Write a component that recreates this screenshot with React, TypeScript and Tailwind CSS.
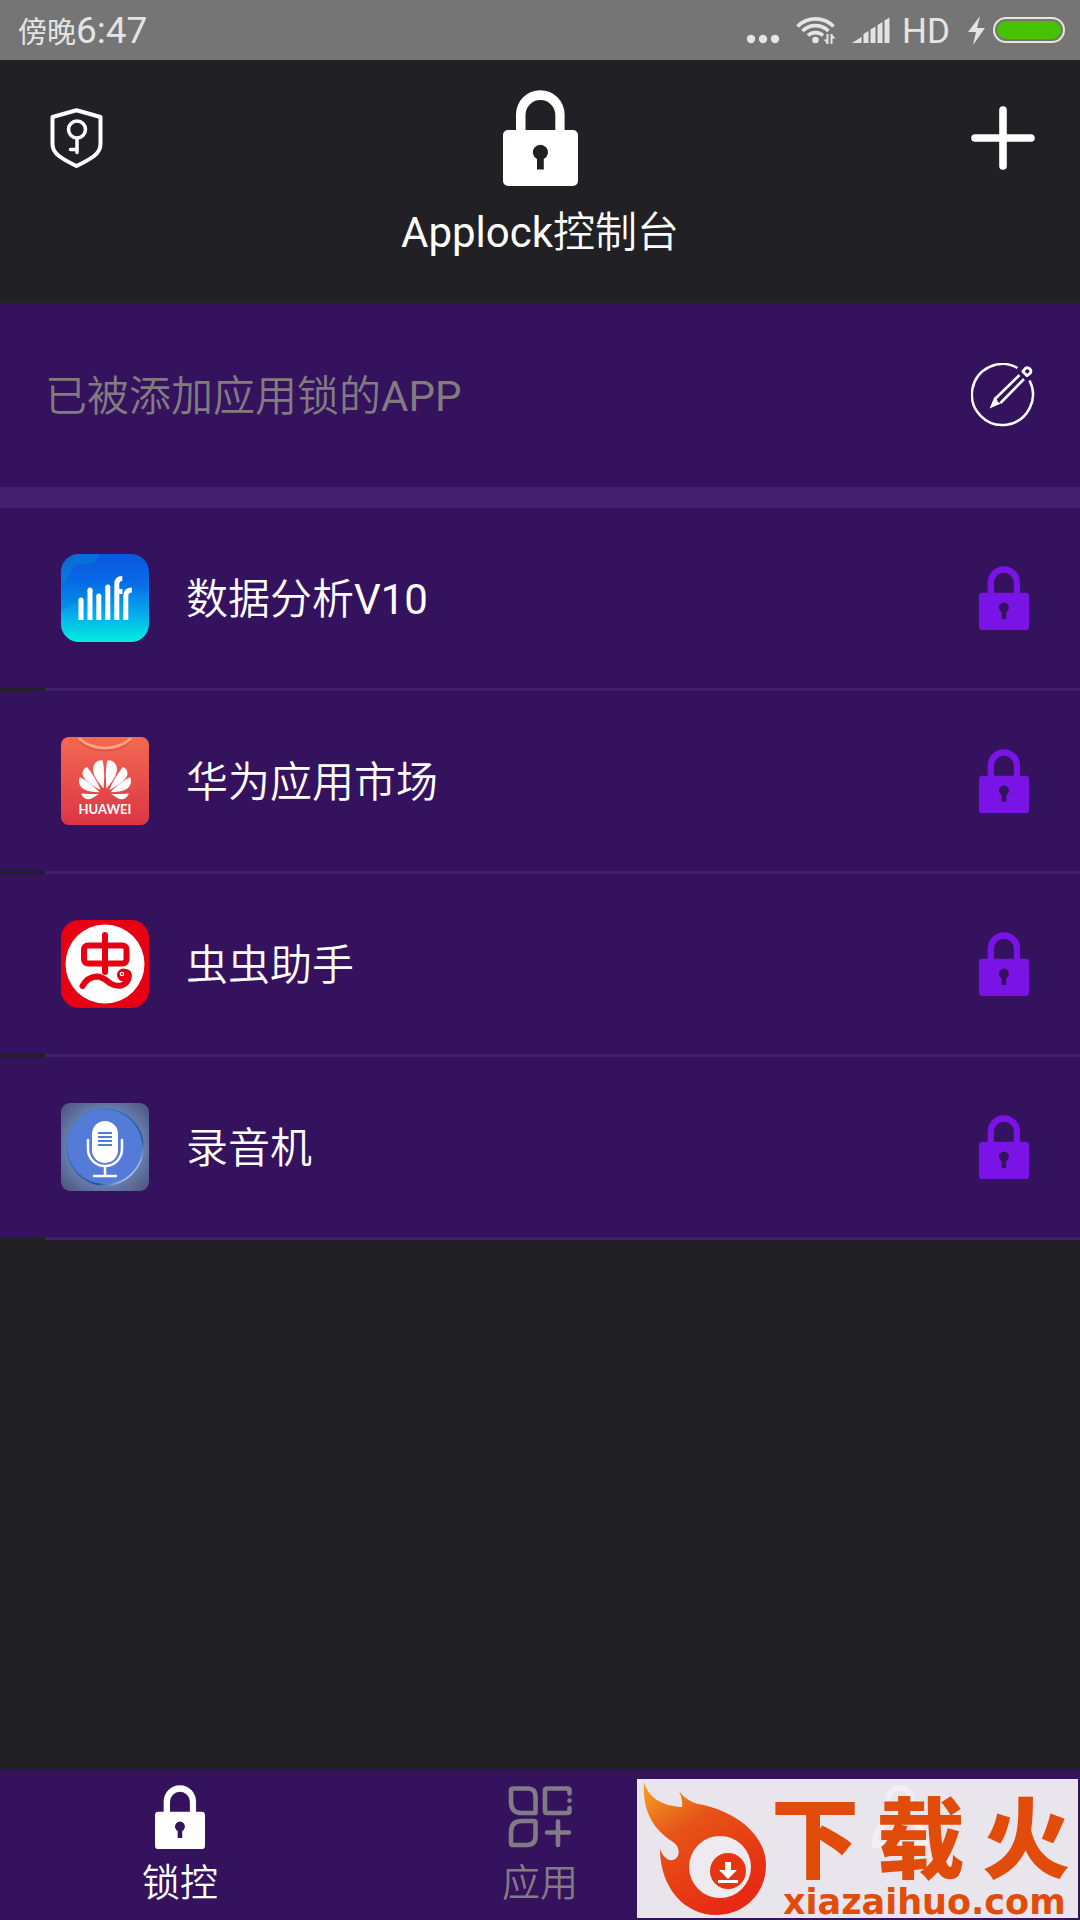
import type { ReactNode } from "react";

function Padlock({ className }: { className: string }) {
  return (
    <svg viewBox="0 0 75 96" className={className} fill="currentColor" aria-hidden="true">
      <path
        fillRule="evenodd"
        d="M13 40V24.500a24.300 24.300 0 0 1 48.600 0V40H70a5 5 0 0 1 5 5v46a5 5 0 0 1-5 5H5a5 5 0 0 1-5-5V45a5 5 0 0 1 5-5zM22.500 40h29.800V25a14.900 14.900 0 0 0-29.800 0zM34 69v10.500h6.800V69a7.500 7.500 0 1 0-6.800 0z"
      />
    </svg>
  );
}

function ShieldKey() {
  return (
    <svg viewBox="0 0 53 60" className="h-[60px] w-[53px]" fill="none" stroke="currentColor" strokeWidth="4" strokeLinejoin="round" strokeLinecap="round" aria-hidden="true">
      <path d="M26.500 2.300 50.500 9v27q0 7-6.500 12-6 4.500-17.500 10Q15 52.500 9 48q-6.500-5-6.500-12V9z" />
      <circle cx="27" cy="21.500" r="8.500" strokeWidth="3.500" />
      <path d="M27 30.500V44.500M20.500 41.500H27" strokeWidth="3.500" />
    </svg>
  );
}

function Plus() {
  return (
    <svg viewBox="0 0 64 64" className="size-16" stroke="currentColor" strokeWidth="7.600" strokeLinecap="round" aria-hidden="true">
      <path d="M32 4v56M4 32h56" />
    </svg>
  );
}

function PencilCircle() {
  return (
    <svg viewBox="0 0 64 64" className="size-16" fill="none" stroke="currentColor" strokeWidth="2.500" aria-hidden="true">
      <path d="M46.500 5A30.500 30.500 0 1 0 58.500 17.500" />
      <path d="M48.500 12 24.500 35.500M53 16 29.500 40" strokeWidth="2.600" />
      <path d="M23.500 34 18.500 45.500l11.500-5-3-1.500-1.500-3z" fill="currentColor" stroke="none" />
      <path d="M51.800 8.500 54.500 5.300a3.500 3.500 0 0 1 4.800 4.800L56 12.700z" strokeWidth="2.800" strokeLinejoin="round" />
    </svg>
  );
}

function AnalyticsIcon() {
  return (
    <svg viewBox="0 0 88 88" className="size-[88px]" aria-hidden="true">
      <defs>
        <linearGradient id="analytics" x1="0" y1="0" x2="0" y2="1">
          <stop offset="0" stopColor="#0758dc" />
          <stop offset=".3" stopColor="#0869e8" />
          <stop offset=".65" stopColor="#05a5ec" />
          <stop offset="1" stopColor="#04eee0" />
        </linearGradient>
        <clipPath id="analytics-clip"><rect width="88" height="88" rx="18" /></clipPath>
      </defs>
      <g clipPath="url(#analytics-clip)">
        <rect width="88" height="88" fill="url(#analytics)" />
        <path d="M0 0h39l-6 9-20 2L6 27l-6 5z" fill="#0c86cf" opacity=".45" />
        <path d="M0 32 24 12l25 5-22 25L0 57zM49 17l21-8 18 29-28-5z" fill="#0765dc" opacity=".25" />
      </g>
      <g stroke="#fff" strokeWidth="5" fill="none">
        <path d="M20 66V46M29 66V36M37.800 66V42M46.800 66V33" />
        <path d="M55.800 66V30q0-5.500 5.500-5.500M53.500 37.500h8M64.800 66V42q0-6 6-6" />
      </g>
      <g fill="#fff"><circle cx="20" cy="46" r="2.500" /><circle cx="29" cy="36" r="2.500" /><circle cx="37.800" cy="42" r="2.500" /><circle cx="46.800" cy="33" r="2.500" /></g>
    </svg>
  );
}

function HuaweiIcon() {
  const petals = "M42.500 51.500C34 42 31 35 32.500 29.500 34 24.500 38 23 41.500 23.200 43.500 31 43.500 42 42.500 51.500zM39.500 53C28 46.500 21.500 41.500 21.500 36.500 21.500 33 23.500 31 26 30 31 36 37 45.500 39.500 53zM38.500 55.300C25 55 17.500 51.500 18 43.500c0 0 .3-2 .8-3.200C26 43.500 34 50.500 38.500 55.300zM37.500 57C33 60.500 29.500 62.800 26.500 62.300 23.500 61.800 21 59 20.200 56.500c5.800.5 12.300.5 17.300.5z";
  return (
    <svg viewBox="0 0 88 88" className="size-[88px]" aria-hidden="true">
      <defs>
        <linearGradient id="huawei" x1="0" y1="0" x2="0" y2="1">
          <stop offset="0" stopColor="#f26a52" />
          <stop offset="1" stopColor="#dc3545" />
        </linearGradient>
      </defs>
      <rect width="88" height="88" rx="8" fill="url(#huawei)" />
      <path d="M17 1q11 10.500 27 10.500T70 1" fill="none" stroke="#d9503f" strokeWidth="3" opacity=".5" transform="translate(0 2)" />
      <path d="M18 1.500Q29 11 44 11t26-9.500" fill="none" stroke="#ffa68f" strokeWidth="2.500" />
      <path d={petals} fill="#fff" />
      <path d={petals} fill="#fff" transform="translate(88 0) scale(-1 1)" />
      <text x="44" y="77.300" textAnchor="middle" fill="#fff" fontSize="13" fontWeight="700" fontFamily="Lato, sans-serif">HUAWEI</text>
    </svg>
  );
}

function BugIcon() {
  return (
    <svg viewBox="0 0 88 88" className="size-[88px]" aria-hidden="true">
      <rect width="88" height="88" rx="18" fill="#e60012" />
      <circle cx="44" cy="44" r="39.500" fill="#fff" />
      <g fill="none" stroke="#e60012" strokeWidth="6" strokeLinecap="round">
        <rect x="23" y="25.500" width="42.500" height="18" rx="4" />
        <path d="M44 15v37" />
        <path d="M21.500 66q5-9 14-9.500c7 0 9 4 14 7 8 4.500 16 2 18-5 1-3 .5-6-3-6.500" />
      </g>
      <circle cx="62.500" cy="55" r="6.500" fill="#e60012" />
      <circle cx="61" cy="54" r="2.300" fill="#fff" />
      <circle cx="61" cy="54" r="1" fill="#e60012" />
    </svg>
  );
}

function RecorderIcon() {
  return (
    <svg viewBox="0 0 88 88" className="size-[88px]" aria-hidden="true">
      <defs>
        <radialGradient id="recorder-bg" cx=".5" cy=".5" r=".7">
          <stop offset=".5" stopColor="#7089bd" />
          <stop offset="1" stopColor="#4a5279" />
        </radialGradient>
        <linearGradient id="recorder-rim" x1="0" y1="0" x2="1" y2="1">
          <stop offset=".2" stopColor="#3f7fd0" />
          <stop offset=".7" stopColor="#1d549c" />
          <stop offset=".85" stopColor="#a9c4ee" />
        </linearGradient>
      </defs>
      <rect width="88" height="88" rx="9" fill="url(#recorder-bg)" />
      <circle cx="44" cy="44" r="38" fill="#547bd8" stroke="url(#recorder-rim)" strokeWidth="1.500" />
      <rect x="31" y="18" width="26" height="42" rx="13" fill="#fff" />
      <g fill="none" stroke="#fff" strokeWidth="2.500" strokeLinecap="round">
        <path d="M27 37v9a17 17 0 0 0 34 0v-9M44 63v9.500M33 73h22" />
      </g>
      <path d="M37 30h14M37 34h14M37 38h14M37 42h14" stroke="#547bd8" strokeWidth="1.800" />
    </svg>
  );
}

function AppsPlus() {
  return (
    <svg viewBox="0 0 64 64" className="size-16" fill="none" stroke="currentColor" strokeWidth="4.600" strokeLinecap="round" strokeLinejoin="round" aria-hidden="true">
      <path d="M5 3.500h15q7.500 0 7.500 8V28H14Q3 28 3 17V5.500q0-2 2-2z" />
      <path d="M61.500 8.500v-3q0-2-2-2H39q-2 0-2 2V26q0 2 2 2h20.500q2 0 2-2v-3" />
      <path d="M61.500 15.500v.1" />
      <path d="M14 36h11.500q2 0 2 2v13q0 9-8.500 9H5q-2 0-2-2V47q0-11 11-11zM50 36.500v23.500M39 47.500h22" />
    </svg>
  );
}

function Person() {
  return (
    <svg viewBox="0 0 64 64" className="size-16" fill="none" stroke="currentColor" strokeWidth="6" aria-hidden="true">
      <circle cx="32" cy="15" r="12" />
      <path d="M7 60q0-25 25-25t25 25z" />
    </svg>
  );
}

function StatusBar() {
  return (
    <div className="flex h-[60px] items-center justify-between bg-[#757575] pr-[15px] pl-[18px] text-[#e4e4e4]">
      <span className="pt-1 text-[29px] leading-10">傍晚<span className="text-[37px]">6:47</span></span>
      <div className="flex items-center">
        <svg viewBox="0 0 34 60" className="h-[60px] w-[34px]" fill="currentColor" aria-hidden="true">
          <circle cx="5" cy="39" r="4.200" /><circle cx="17" cy="39" r="4.200" /><circle cx="29" cy="39" r="4.200" />
        </svg>
        <svg viewBox="0 0 40 60" className="ml-4 h-[60px] w-10" fill="none" stroke="currentColor" strokeWidth="3.700" aria-label="Wi-Fi">
          <path d="M1.500 26.500a25 25 0 0 1 36 0M6.500 31a18.500 18.500 0 0 1 26 0M12 35.500a11 11 0 0 1 15 0" />
          <circle cx="19.500" cy="40" r="3.300" fill="currentColor" stroke="none" />
          <path d="M31.500 34v10M35.500 34v10" strokeWidth="2" />
          <path d="M27.500 39.500h4V44zM35.500 34l4 4.500h-4z" fill="currentColor" stroke="none" />
        </svg>
        <svg viewBox="0 0 38 60" className="ml-4 h-[60px] w-[38px]" fill="currentColor" aria-label="Signal">
          <path d="M0 43l9.500-6v6zM11.500 43V34l5-3v12zM18.500 43V29.500l5-3V43zM25.500 43V25l5-3v21zM32.500 43V20.500l5-3V43z" />
        </svg>
        <span className="ml-3 pt-1 text-[35px] leading-10">HD</span>
        <svg viewBox="0 0 18 60" className="ml-[18px] h-[60px] w-[18px]" fill="currentColor" aria-hidden="true">
          <path d="M12 16 0 32h8L5 45 17 28H9z" />
        </svg>
        <div className="ml-[7px] h-[26px] w-[72px] rounded-full border-2 border-[#e8e8d8] p-[2px]">
          <div className="h-full rounded-full bg-[#45c303]" />
        </div>
      </div>
    </div>
  );
}

function AppRow({ name, suffix, icon }: { name: string; suffix?: string; icon: ReactNode }) {
  return (
    <li>
      <div className="flex h-[180px] items-center bg-[#35125d] pr-[51px] pl-[61px]">
        {icon}
        <span className="ml-[37px] flex-1 pt-1 text-[42px] leading-[60px]">
          {name}
          {suffix && <span className="font-normal">{suffix}</span>}
        </span>
        <button type="button" aria-label={`解锁 ${name}`} className="text-[#7a14e6]">
          <Padlock className="h-16 w-[50px]" />
        </button>
      </div>
      <div className="ml-[45px] h-[3px] bg-[#43206f]" />
    </li>
  );
}

function Tab({ label, icon, color }: { label: string; icon: ReactNode; color: string }) {
  return (
    <button type="button" className={`flex flex-1 flex-col items-center pt-[15px] ${color}`}>
      {icon}
      <span className="mt-2 text-[38px] leading-[52px]">{label}</span>
    </button>
  );
}

function SiteBadge() {
  return (
    <div className="absolute right-[2px] bottom-[2px] flex h-[139px] w-[441px] bg-[#f0eef3]/96 text-[#e24c0b]">
      <svg viewBox="0 0 130 139" className="h-[139px] w-[130px] shrink-0" aria-hidden="true">
        <defs>
          <linearGradient id="flame" x1="0" y1="0" x2=".6" y2="1">
            <stop offset="0" stopColor="#f6a325" />
            <stop offset=".4" stopColor="#e65317" />
            <stop offset="1" stopColor="#e82913" />
          </linearGradient>
        </defs>
        <path d="M7 3C11 18 24 27 45 28q1-7-3-16 7 10 19 13c36 6 68 30 68 61 0 28-21 50-50 50-32 0-56-28-56-66 3 8 8 12 13 11 7-2 8-13 0-18C17 51 5 33 7 3z" fill="url(#flame)" />
        <circle cx="83" cy="88" r="31" fill="#eeeaf0" />
        <circle cx="91" cy="92" r="18" fill="#e53512" />
        <path d="M88 83h6v8h6l-9 9-9-9h6zM81 101h20v3H81z" fill="#fff" />
      </svg>
      <div className="flex flex-1 flex-col">
        <div className="flex h-[109px] justify-between pt-5 pr-2 pl-1 text-[88px] leading-[84px] font-black">
          <span>下</span>
          <span>载</span>
          <span>火</span>
        </div>
        <span className="pl-4 font-['DejaVu_Sans',sans-serif] text-[35px] leading-[28px] font-bold">xiazaihuo.com</span>
      </div>
    </div>
  );
}

export default function App() {
  return (
    <div className="relative flex min-h-screen flex-col bg-[#212024] font-['Roboto','Noto_Sans_CJK_SC',sans-serif] text-white">
      <StatusBar />
      <header className="flex items-start justify-between px-[45px] pt-[30px] pb-[46px]">
        <button type="button" aria-label="安全设置" className="mt-[18px] flex w-16 pl-[5px]">
          <ShieldKey />
        </button>
        <div className="flex flex-col items-center">
          <Padlock className="h-24 w-[75px]" />
          <h1 className="mt-[23px] text-[42px] leading-[48px] font-[350]"><span className="font-normal">Applock</span>控制台</h1>
        </div>
        <button type="button" aria-label="添加" className="mt-4">
          <Plus />
        </button>
      </header>
      <main className="flex-1 font-[350]">
        <div className="flex h-[184px] items-center justify-between bg-[#35125d] px-[45px]">
          <h2 className="pt-1 text-[42px] leading-[60px] text-[#827b80]">已被添加应用锁的<span className="font-normal">APP</span></h2>
          <button type="button" aria-label="编辑">
            <PencilCircle />
          </button>
        </div>
        <div className="h-[21px] bg-[#43206f]" />
        <ul>
          <AppRow name="数据分析" suffix="V10" icon={<AnalyticsIcon />} />
          <AppRow name="华为应用市场" icon={<HuaweiIcon />} />
          <AppRow name="虫虫助手" icon={<BugIcon />} />
          <AppRow name="录音机" icon={<RecorderIcon />} />
        </ul>
      </main>
      <nav className="flex h-[150px] bg-[#35125d] font-[350]">
        <Tab label="锁控" color="text-white" icon={<Padlock className="h-16 w-[50px]" />} />
        <Tab label="应用" color="text-[#827b86]" icon={<AppsPlus />} />
        <button type="button" aria-label="我的" className="flex flex-1 flex-col items-center pt-[15px] text-white">
          <Person />
        </button>
      </nav>
      <SiteBadge />
    </div>
  );
}
